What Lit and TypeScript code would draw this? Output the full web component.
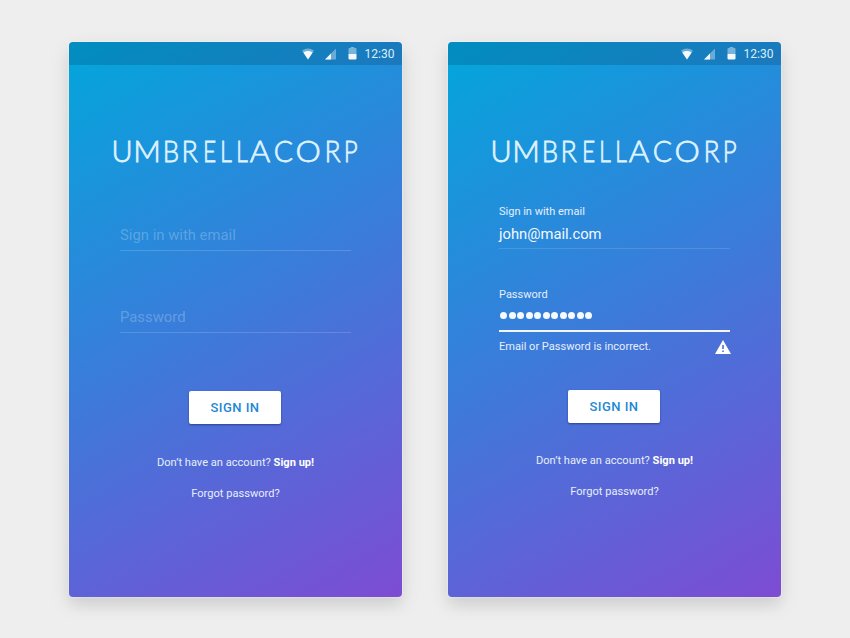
import { LitElement, html, css } from "lit";
import { customElement, property } from "lit/decorators.js";
import { styleMap } from "lit/directives/style-map.js";

@customElement("status-bar")
class StatusBar extends LitElement {
  static styles = css`
    :host { display: block; height: 23px; background: rgba(0, 20, 50, 0.17); color: #d9f0fb; }
    .bar { height: 100%; display: flex; align-items: center; justify-content: flex-end; padding-right: 6.5px; }
    .icons { display: block; width: 56px; height: 23px; margin-right: 7.5px; }
    .time { width: 31px; font: 400 12px/23px Roboto, sans-serif; white-space: nowrap; padding-top: 2px; box-sizing: border-box; }
  `;
  render() {
    return html`<div class="bar">
      <svg class="icons" viewBox="0 0 56 23">
        <path d="M1 8.6Q7 4.4 13 8.6L7 17.4Z" fill="#fff" opacity=".38" />
        <path d="M2.3 10.4Q7 7.8 11.7 10.4L7 17.4Z" fill="#fff" opacity=".93" />
        <path d="M24 17.4L35 6.4V17.4Z" fill="#fff" opacity=".36" />
        <path d="M24 17.4L30 11.4V17.4Z" fill="#fff" opacity=".9" />
        <path d="M47.5 12V7Q47.5 6 48.5 6H49.7V5H53.3V6H54.5Q55.5 6 55.5 7V12Z" fill="#fff" opacity=".42" />
        <path d="M47.5 12H55.5V16.6Q55.5 17.4 54.7 17.4H48.3Q47.5 17.4 47.5 16.6Z" fill="#fff" opacity=".95" />
      </svg>
      <span class="time">12:30</span>
    </div>`;
  }
}

const SIZE = 30;
/* glyph, ink start and end in em, left edge and width on the card in px */
const LETTERS: [string, number, number, number, number][] = [
  ["U", 0.09, 0.641, 44.7, 16],
  ["M", 0.09, 0.813, 67.4, 22],
  ["B", 0.09, 0.578, 95.6, 12.6],
  ["R", 0.09, 0.594, 114.9, 13.5],
  ["E", 0.09, 0.531, 136.3, 10],
  ["L", 0.09, 0.5, 153.2, 9.6],
  ["L", 0.09, 0.5, 168.9, 9.6],
  ["A", 0.008, 0.656, 181, 20.2],
  ["C", 0.047, 0.645, 205.8, 17],
  ["O", 0.047, 0.734, 228.2, 22],
  ["R", 0.09, 0.594, 258, 13.3],
  ["P", 0.09, 0.547, 277.3, 11],
];

@customElement("brand-logo")
class BrandLogo extends LitElement {
  static styles = css`
    :host { display: block; height: 40px; }
    .word { display: flex; padding-left: 44.7px; font: 300 30px/40px Lato, sans-serif; color: #dff3ff; -webkit-text-stroke: 0.8px #dff3ff; }
    .letter { flex: none; transform-origin: 0 0; }
  `;
  render() {
    return html`<div class="word">${LETTERS.map(([glyph, start, end, left, width], i) => {
      const scale = width / ((end - start) * SIZE);
      const slot = (LETTERS[i + 1]?.[3] ?? left + width) - left;
      return html`<span class="letter" style=${styleMap({
        width: `${slot.toFixed(2)}px`,
        transform: `translateY(-2px) scaleX(${scale.toFixed(3)}) translateX(${(-start * SIZE).toFixed(2)}px)`,
      })}>${glyph}</span>`;
    })}</div>`;
  }
}

@customElement("login-screen")
class LoginScreen extends LitElement {
  @property({ type: Boolean, reflect: true }) filled = false;
  static styles = css`
    :host {
      display: block; width: 333px; height: 555px; border-radius: 4px;
      box-shadow: 0 0 2px rgba(255, 255, 255, 0.9), 0 7px 20px rgba(0, 0, 0, 0.11), 0 9px 12px rgba(0, 0, 0, 0.04);
    }
    .card {
      width: 333px; height: 555px; box-sizing: border-box; overflow: hidden; border-radius: 4px;
      background: linear-gradient(151deg, #04a5dc 2%, #3c7bda 49%, #804ad3 102%);
      display: flex; flex-direction: column; color: #e6effc;
      font-family: Roboto, sans-serif;
    }
    brand-logo { margin-top: 67px; }
    :host([filled]) brand-logo { margin-top: 66.5px; }
    .form { width: 231px; height: 175px; margin: 44px 0 0 51px; }
    :host([filled]) .form { height: 174.5px; }
    .empty { height: 35px; box-sizing: border-box; border-bottom: 1px solid rgba(255, 255, 255, 0.16); color: rgba(255, 255, 255, 0.24); font-size: 14.85px; line-height: 38px; }
    .empty + .empty { margin-top: 47px; }
    .label { font-size: 11px; line-height: 14px; }
    .value { font-size: 14.75px; line-height: 20px; color: #f4f9ff; }
    .rule { height: 1px; background: rgba(255, 255, 255, 0.13); }
    .rule.active { height: 2px; background: #f4f6ff; }
    .group.first { height: 83px; margin-top: -11px; }
    .group.first .value { margin-top: 5px; margin-bottom: 4px; }
    .dots { display: flex; gap: 1.55px; margin: 10px 0 11px 1px; height: 7px; }
    .dot { width: 7px; height: 7px; border-radius: 50%; background: #f6f9ff; }
    .error { display: flex; justify-content: space-between; align-items: center; height: 18px; margin-top: 6px; font-size: 11.05px; }
    .warn { display: block; width: 16px; height: 14px; margin-right: -0.5px; }
    .button {
      align-self: center; margin-left: -1px; width: 92px; height: 33px; border: 0; padding: 0; border-radius: 2px;
      background: #fff; color: #2287d5; font: 500 13px/33px Roboto, sans-serif; letter-spacing: 0.45px; text-align: center;
      box-shadow: 0 1px 2px rgba(20, 20, 80, 0.5);
    }
    .links { text-align: center; font-size: 11.1px; line-height: 16px; margin-top: 30px; }
    :host(:not([filled])) .links { margin-top: 30.5px; }
    .signup { font-weight: 700; color: #fff; }
    .forgot { margin-top: 15px; }
  `;
  render() {
    return html`<div class="card">
      <status-bar></status-bar>
      <brand-logo></brand-logo>
      <div class="form">
        ${this.filled
          ? html`
              <div class="group first">
                <div class="label">Sign in with email</div>
                <div class="value">john@mail.com</div>
                <div class="rule"></div>
              </div>
              <div class="group">
                <div class="label">Password</div>
                <div class="dots">${Array.from({ length: 11 }, () => html`<span class="dot"></span>`)}</div>
                <div class="rule active"></div>
                <div class="error">
                  <span>Email or Password is incorrect.</span>
                  <svg class="warn" viewBox="0 0 16 14">
                    <path fill="#fff" fill-rule="evenodd" d="M8 0L16 14H0ZM7.2 5V9H8.8V5ZM7.2 10.4V12H8.8V10.4Z" />
                  </svg>
                </div>
              </div>`
          : html`
              <div class="empty">Sign in with email</div>
              <div class="empty">Password</div>`}
      </div>
      <button class="button">SIGN IN</button>
      <div class="links">
        <div>Don’t have an account? <span class="signup">Sign up!</span></div>
        <div class="forgot">Forgot password?</div>
      </div>
    </div>`;
  }
}

@customElement("app-root")
class AppRoot extends LitElement {
  static styles = css`
    :host { display: flex; box-sizing: border-box; width: 850px; height: 638px; background: #eeeeee; padding: 42px 0 0 69px; gap: 46px; align-items: flex-start; overflow: hidden; }
  `;
  render() {
    return html`<login-screen></login-screen><login-screen filled></login-screen>`;
  }
}
